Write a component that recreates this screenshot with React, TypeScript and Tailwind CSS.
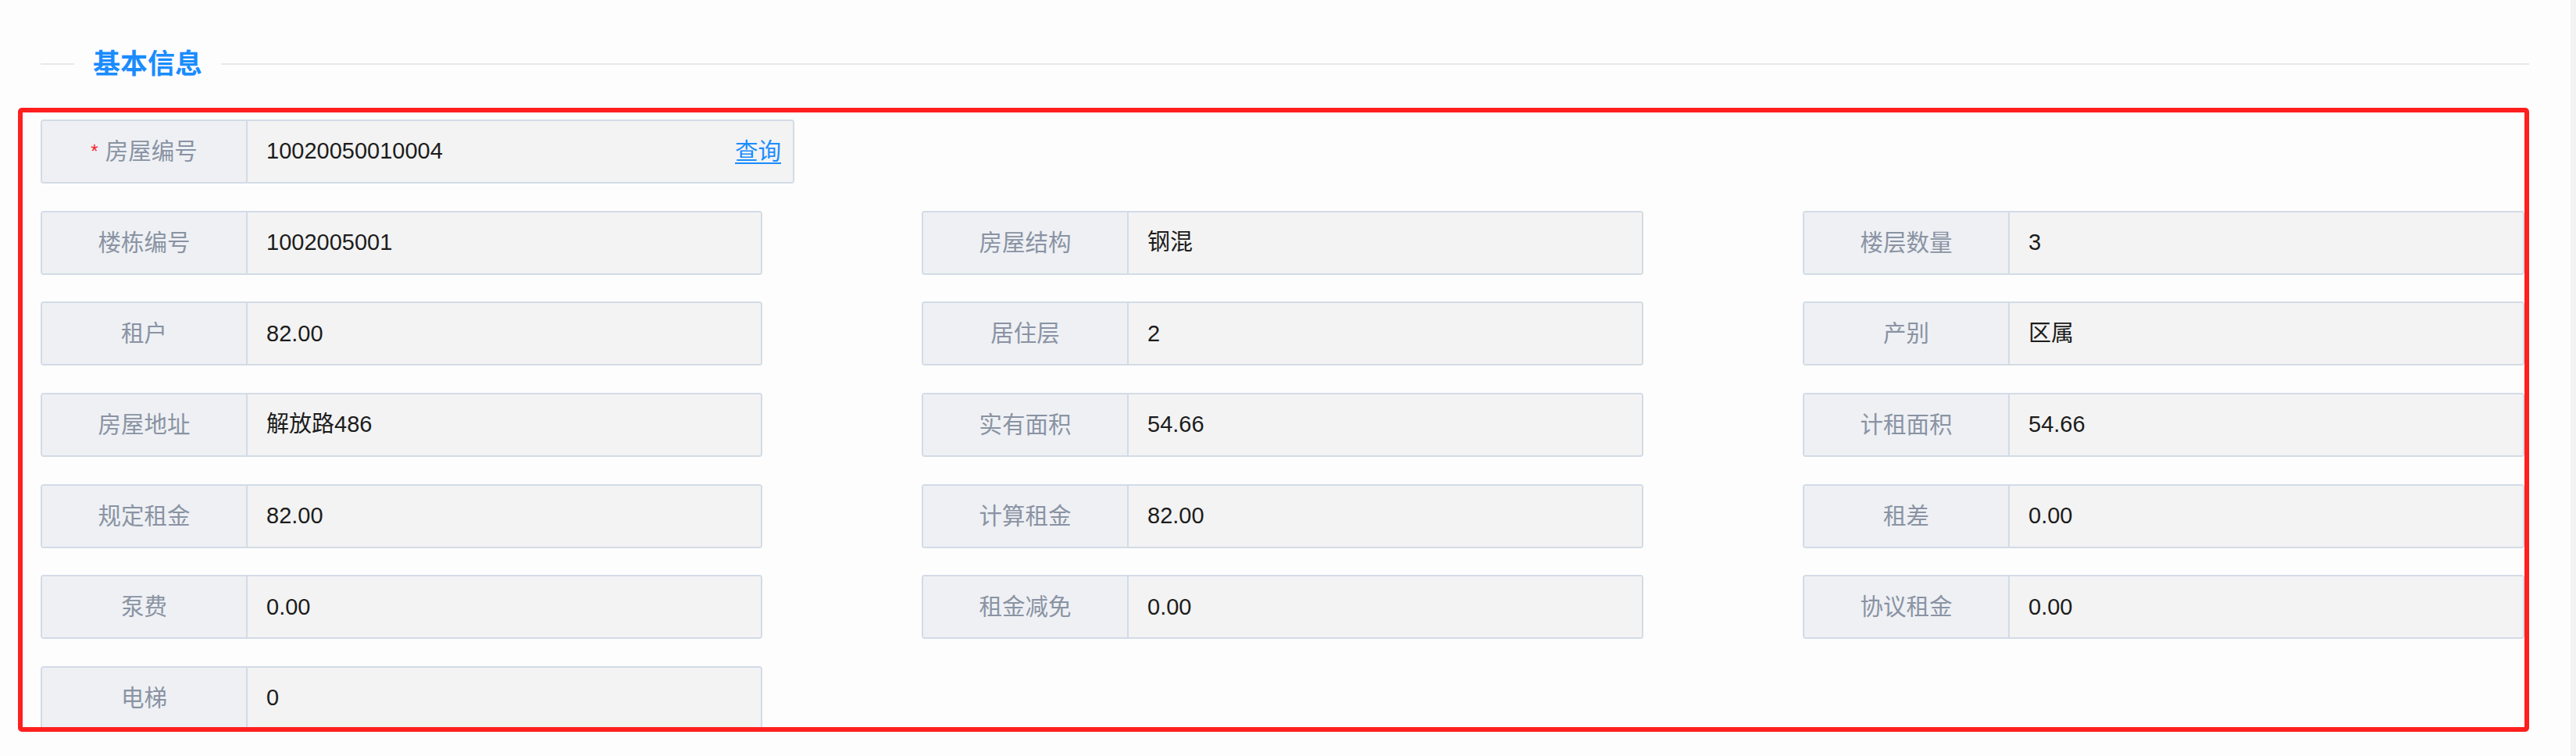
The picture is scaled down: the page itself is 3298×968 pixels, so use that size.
import React from "react";

type Field = { label: string; value: string };

const rows: Field[][] = [
  [
    { label: "楼栋编号", value: "1002005001" },
    { label: "房屋结构", value: "钢混" },
    { label: "楼层数量", value: "3" },
  ],
  [
    { label: "租户", value: "82.00" },
    { label: "居住层", value: "2" },
    { label: "产别", value: "区属" },
  ],
  [
    { label: "房屋地址", value: "解放路486" },
    { label: "实有面积", value: "54.66" },
    { label: "计租面积", value: "54.66" },
  ],
  [
    { label: "规定租金", value: "82.00" },
    { label: "计算租金", value: "82.00" },
    { label: "租差", value: "0.00" },
  ],
  [
    { label: "泵费", value: "0.00" },
    { label: "租金减免", value: "0.00" },
    { label: "协议租金", value: "0.00" },
  ],
  [{ label: "电梯", value: "0" }],
];

function Item({ label, value }: Field) {
  return (
    <div className="flex h-[82px] w-[924px] shrink-0 overflow-hidden rounded-[4px] border-2 border-[#d3dbe6]">
      <div className="flex w-[263px] shrink-0 items-center justify-center border-r-2 border-[#d3dbe6] bg-[#eef0f4] text-[29.5px] text-[#8a93a3]">
        {label}
      </div>
      <div className="flex flex-1 items-center bg-[#f3f3f3] pl-[24px] text-[29px] text-[#1c1c1c]">
        {value}
      </div>
    </div>
  );
}

export default function App() {
  return (
    <div
      className="relative flex h-[968px] w-[3298px] overflow-hidden bg-[#fdfdfd]"
      style={{ fontFamily: '"Liberation Sans", "Noto Sans CJK SC", sans-serif' }}
    >
      <div className="flex flex-1 flex-col pl-[52px] pr-[53px] pt-[59px]">
        {/* section title */}
        <div className="flex h-[46px] items-center">
          <div className="h-[2px] w-[43px] bg-[#e8e8e8]" />
          <div className="mx-[24px] text-[35px] font-bold leading-[46px] text-[#1a8cff]">
            基本信息
          </div>
          <div className="h-[2px] flex-1 bg-[#e8e8e8]" />
        </div>

        <div className="mt-[48px] flex flex-col gap-[34.7px]">
          {/* first row with query link */}
          <div className="flex h-[82px] w-[965px] overflow-hidden rounded-[4px] border-2 border-[#d3dbe6]">
            <div className="flex w-[263px] shrink-0 items-center justify-center border-r-2 border-[#d3dbe6] bg-[#eef0f4] text-[29.5px] text-[#8a93a3]">
              <span className="mr-[9px] text-[24px] text-[#f5222d]">*</span>
              房屋编号
            </div>
            <div className="flex flex-1 items-center justify-between bg-[#f3f3f3] pl-[24px] pr-[15px] text-[29px] text-[#1c1c1c]">
              <span>10020050010004</span>
              <span className="text-[29.5px] text-[#1a8cff] underline underline-offset-[4px]">
                查询
              </span>
            </div>
          </div>

          {rows.map((row, i) => (
            <div key={i} className="flex gap-[204px]">
              {row.map((f) => (
                <Item key={f.label} label={f.label} value={f.value} />
              ))}
            </div>
          ))}
        </div>
      </div>

      {/* scrollbar strip */}
      <div className="w-[7px] shrink-0 bg-[#f3f3f3]" />

      {/* red annotation frame */}
      <div className="pointer-events-none absolute left-[23px] top-[138px] h-[799px] w-[3215px] rounded-[5px] border-[6px] border-[#ff1f1f]" />
    </div>
  );
}
